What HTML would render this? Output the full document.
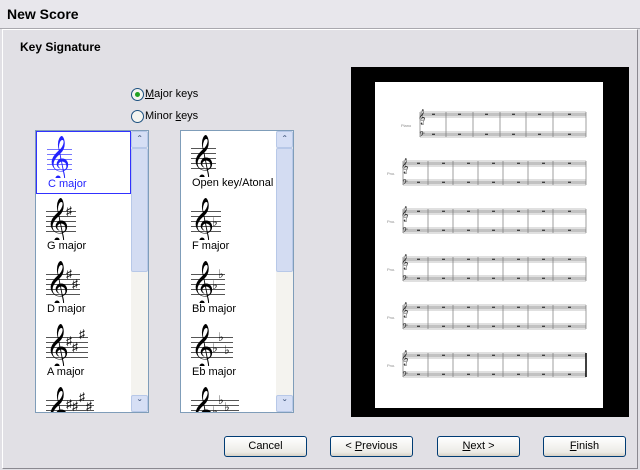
<!DOCTYPE html>
<html><head><meta charset="utf-8"><style>
body{margin:0;width:640px;height:470px;background:#e1e0e5;font-family:"Liberation Sans",Arial,sans-serif;font-size:11px;position:relative;overflow:hidden}
.title{position:absolute;left:0;top:0;width:640px;height:28px;background:#e8e7ec;border-bottom:1px solid #a9a8ae}
.title span{position:absolute;left:7px;top:6px;font-weight:bold;font-size:14px;color:#000}
.frame{position:absolute;left:2px;top:29px;width:634px;height:438px;border:1px solid #fff;border-right-color:#8a8990;border-bottom-color:#8a8990}
.h{position:absolute;left:20px;top:40px;font-weight:bold;font-size:12px}
.radio{position:absolute;left:131px;width:11px;height:11px;border:1px solid #1c5180;border-radius:50%;background:#f4f4f0}
.rl{position:absolute;left:145px;font-size:11px}
.list{position:absolute;top:130px;width:112px;height:281px;border:1px solid #7f9db9;background:#fff;overflow:hidden}
.sb{position:absolute;right:0;top:0;width:17px;height:281px;background:#f4f3ef}
.sbb{position:absolute;left:0;width:15px;height:15px;border:1px solid #b7c8e8;border-radius:2px;background:#d6dff5;font-size:10px;font-weight:bold;text-align:center;line-height:17px;color:#4d6185}
.thumb{position:absolute;left:0;top:17px;width:15px;height:122px;border:1px solid #b7c8e8;border-radius:2px;background:#d3dcf2}
.item{position:absolute;left:0;width:95px;height:63px}
.item svg{position:absolute;left:10px;top:4px}
.item .l{position:absolute;left:11px;top:46px;font-size:11px}
.btn{position:absolute;top:436px;width:81px;height:19px;border:1px solid #003c74;border-radius:3px;background:linear-gradient(#fff,#ecebe6 80%,#d6d0c5);text-align:center;line-height:19px;font-size:11px}
.prev{position:absolute;left:351px;top:67px;width:278px;height:350px;background:#000}
.page{position:absolute;left:24px;top:15px;width:228px;height:326px;background:#fff}
.c{font-size:39px;font-family:"DejaVu Sans"}
</style></head><body>
<div class="title"><span>New Score</span></div>
<div class="frame"></div>
<div class="h">Key Signature</div>
<div class="radio" style="top:88px"><div style="position:absolute;left:3px;top:3px;width:5px;height:5px;border-radius:50%;background:#21a121"></div></div>
<div class="rl" style="top:88px"><u>M</u>ajor keys</div>
<div class="radio" style="top:110px"></div>
<div class="rl" style="top:110px">Minor <u>k</u>eys</div>

<div class="list" style="left:35px">
 <div class="item" style="top:0;border:1px solid #3131ff;width:93px;height:61px;color:#2222ff"><svg width="40" height="42"><g stroke="#7777ff" stroke-width="1"><line x1="0" y1="13.5" x2="25" y2="13.5"/><line x1="0" y1="18.5" x2="25" y2="18.5"/><line x1="0" y1="23.5" x2="25" y2="23.5"/><line x1="0" y1="28.5" x2="25" y2="28.5"/><line x1="0" y1="33.5" x2="25" y2="33.5"/></g><text x="0" y="35" class="c" fill="#2222ff">𝄞</text></svg><div class="l">C major</div></div>
 <div class="item" style="top:63px"><svg width="50" height="42"><g stroke="#555"><line x1="0" y1="13.5" x2="30" y2="13.5"/><line x1="0" y1="18.5" x2="30" y2="18.5"/><line x1="0" y1="23.5" x2="30" y2="23.5"/><line x1="0" y1="28.5" x2="30" y2="28.5"/><line x1="0" y1="33.5" x2="30" y2="33.5"/></g><text x="0" y="35" class="c">𝄞</text><text x="20" y="17" font-size="12">♯</text></svg><div class="l">G major</div></div>
 <div class="item" style="top:126px"><svg width="50" height="42"><g stroke="#555"><line x1="0" y1="13.5" x2="34" y2="13.5"/><line x1="0" y1="18.5" x2="34" y2="18.5"/><line x1="0" y1="23.5" x2="34" y2="23.5"/><line x1="0" y1="28.5" x2="34" y2="28.5"/><line x1="0" y1="33.5" x2="34" y2="33.5"/></g><text x="0" y="35" class="c">𝄞</text><text x="20" y="17" font-size="12">♯</text><text x="26" y="27" font-size="12">♯</text></svg><div class="l">D major</div></div>
 <div class="item" style="top:189px"><svg width="50" height="42"><g stroke="#555"><line x1="0" y1="13.5" x2="42" y2="13.5"/><line x1="0" y1="18.5" x2="42" y2="18.5"/><line x1="0" y1="23.5" x2="42" y2="23.5"/><line x1="0" y1="28.5" x2="42" y2="28.5"/><line x1="0" y1="33.5" x2="42" y2="33.5"/></g><text x="0" y="35" class="c">𝄞</text><text x="20" y="21" font-size="12">♯</text><text x="26" y="27" font-size="12">♯</text><text x="33" y="14" font-size="12">♯</text></svg><div class="l">A major</div></div>
 <div class="item" style="top:252px"><svg width="60" height="42"><g stroke="#555"><line x1="0" y1="13.5" x2="48" y2="13.5"/><line x1="0" y1="18.5" x2="48" y2="18.5"/><line x1="0" y1="23.5" x2="48" y2="23.5"/></g><text x="0" y="35" class="c">𝄞</text><text x="20" y="21" font-size="12">♯</text><text x="26" y="23" font-size="12">♯</text><text x="33" y="14" font-size="12">♯</text><text x="40" y="23" font-size="12">♯</text></svg></div>
 <div class="sb"><div class="sbb" style="top:0">ˆ</div><div class="thumb"></div><div class="sbb" style="top:264px">ˇ</div></div>
</div>

<div class="list" style="left:180px">
 <div class="item" style="top:0"><svg width="40" height="42"><g stroke="#555"><line x1="0" y1="13.5" x2="25" y2="13.5"/><line x1="0" y1="18.5" x2="25" y2="18.5"/><line x1="0" y1="23.5" x2="25" y2="23.5"/><line x1="0" y1="28.5" x2="25" y2="28.5"/><line x1="0" y1="33.5" x2="25" y2="33.5"/></g><text x="0" y="35" class="c">𝄞</text></svg><div class="l">Open key/Atonal</div></div>
 <div class="item" style="top:63px"><svg width="40" height="42"><g stroke="#555"><line x1="0" y1="13.5" x2="30" y2="13.5"/><line x1="0" y1="18.5" x2="30" y2="18.5"/><line x1="0" y1="23.5" x2="30" y2="23.5"/><line x1="0" y1="28.5" x2="30" y2="28.5"/><line x1="0" y1="33.5" x2="30" y2="33.5"/></g><text x="0" y="35" class="c">𝄞</text><text x="21" y="28" font-size="12">♭</text></svg><div class="l">F major</div></div>
 <div class="item" style="top:126px"><svg width="50" height="42"><g stroke="#555"><line x1="0" y1="13.5" x2="34" y2="13.5"/><line x1="0" y1="18.5" x2="34" y2="18.5"/><line x1="0" y1="23.5" x2="34" y2="23.5"/><line x1="0" y1="28.5" x2="34" y2="28.5"/><line x1="0" y1="33.5" x2="34" y2="33.5"/></g><text x="0" y="35" class="c">𝄞</text><text x="21" y="28" font-size="12">♭</text><text x="27" y="17" font-size="12">♭</text></svg><div class="l">Bb major</div></div>
 <div class="item" style="top:189px"><svg width="50" height="42"><g stroke="#555"><line x1="0" y1="13.5" x2="42" y2="13.5"/><line x1="0" y1="18.5" x2="42" y2="18.5"/><line x1="0" y1="23.5" x2="42" y2="23.5"/><line x1="0" y1="28.5" x2="42" y2="28.5"/><line x1="0" y1="33.5" x2="42" y2="33.5"/></g><text x="0" y="35" class="c">𝄞</text><text x="21" y="28" font-size="12">♭</text><text x="27" y="17" font-size="12">♭</text><text x="33" y="30" font-size="12">♭</text></svg><div class="l">Eb major</div></div>
 <div class="item" style="top:252px"><svg width="60" height="42"><g stroke="#555"><line x1="0" y1="13.5" x2="48" y2="13.5"/><line x1="0" y1="18.5" x2="48" y2="18.5"/><line x1="0" y1="23.5" x2="48" y2="23.5"/></g><text x="0" y="35" class="c">𝄞</text><text x="21" y="28" font-size="12">♭</text><text x="27" y="17" font-size="12">♭</text><text x="33" y="24" font-size="12">♭</text></svg></div>
 <div class="sb"><div class="sbb" style="top:0">ˆ</div><div class="thumb"></div><div class="sbb" style="top:264px">ˇ</div></div>
</div>

<div class="prev"><div class="page">
<svg width="228" height="326" font-family="Liberation Sans">
<defs>
<g id="sys"><g stroke="#777" stroke-width="0.45" fill="none">
 <path d="M0 0H183M0 1.25H183M0 2.5H183M0 3.75H183M0 5H183M0 19H183M0 20.25H183M0 21.5H183M0 22.75H183M0 24H183"/>
 <path d="M0 0V24M25 0V24M50 0V24M75 0V24M100 0V24M125 0V24M150 0V24M183 0V24" stroke-width="0.7"/></g>
 <g fill="#222"><rect x="14" y="1.8" width="3" height="1"/><rect x="39" y="1.8" width="3" height="1"/><rect x="64" y="1.8" width="3" height="1"/><rect x="89" y="1.8" width="3" height="1"/><rect x="114" y="1.8" width="3" height="1"/><rect x="139" y="1.8" width="3" height="1"/><rect x="165" y="1.8" width="3" height="1"/>
 <rect x="14" y="20.8" width="3" height="1"/><rect x="39" y="20.8" width="3" height="1"/><rect x="64" y="20.8" width="3" height="1"/><rect x="89" y="20.8" width="3" height="1"/><rect x="114" y="20.8" width="3" height="1"/><rect x="139" y="20.8" width="3" height="1"/><rect x="165" y="20.8" width="3" height="1"/></g>
</g>
</defs>
<g transform="translate(45,30)">
 <g stroke="#777" stroke-width="0.45" fill="none"><path d="M0 0H166M0 1.25H166M0 2.5H166M0 3.75H166M0 5H166M0 20H166M0 21.25H166M0 22.5H166M0 23.75H166M0 25H166"/>
 <path d="M0 0V25M26 0V25M53 0V25M80 0V25M106 0V25M133 0V25M166 0V25" stroke-width="0.7"/></g>
 <g fill="#222"><rect x="12" y="1.8" width="3" height="1"/><rect x="38" y="1.8" width="3" height="1"/><rect x="65" y="1.8" width="3" height="1"/><rect x="92" y="1.8" width="3" height="1"/><rect x="118" y="1.8" width="3" height="1"/><rect x="148" y="1.8" width="3" height="1"/><rect x="12" y="21.8" width="3" height="1"/><rect x="38" y="21.8" width="3" height="1"/><rect x="65" y="21.8" width="3" height="1"/><rect x="92" y="21.8" width="3" height="1"/><rect x="118" y="21.8" width="3" height="1"/><rect x="148" y="21.8" width="3" height="1"/></g>
</g>
<use href="#sys" x="28" y="79"/><use href="#sys" x="28" y="127"/><use href="#sys" x="28" y="175"/><use href="#sys" x="28" y="223"/><use href="#sys" x="28" y="271"/>
<path d="M211 271V295" stroke="#000" stroke-width="1.5"/>
<g font-family="DejaVu Sans" font-size="13" fill="#333">
<text x="43" y="39">𝄞</text><text x="44" y="56" font-size="9">𝄢</text>
<text x="26" y="88">𝄞</text><text x="27" y="104" font-size="9">𝄢</text>
<text x="26" y="136">𝄞</text><text x="27" y="152" font-size="9">𝄢</text>
<text x="26" y="184">𝄞</text><text x="27" y="200" font-size="9">𝄢</text>
<text x="26" y="232">𝄞</text><text x="27" y="248" font-size="9">𝄢</text>
<text x="26" y="280">𝄞</text><text x="27" y="296" font-size="9">𝄢</text>
</g>
<g font-size="4" fill="#888"><text x="26" y="45">Piano</text><text x="12" y="93">Pno.</text><text x="12" y="141">Pno.</text><text x="12" y="189">Pno.</text><text x="12" y="237">Pno.</text><text x="12" y="285">Pno.</text></g>
</svg></div></div>

<div class="btn" style="left:224px">Cancel</div>
<div class="btn" style="left:330px">&lt; <u>P</u>revious</div>
<div class="btn" style="left:437px"><u>N</u>ext &gt;</div>
<div class="btn" style="left:543px"><u>F</u>inish</div>
</body></html>
